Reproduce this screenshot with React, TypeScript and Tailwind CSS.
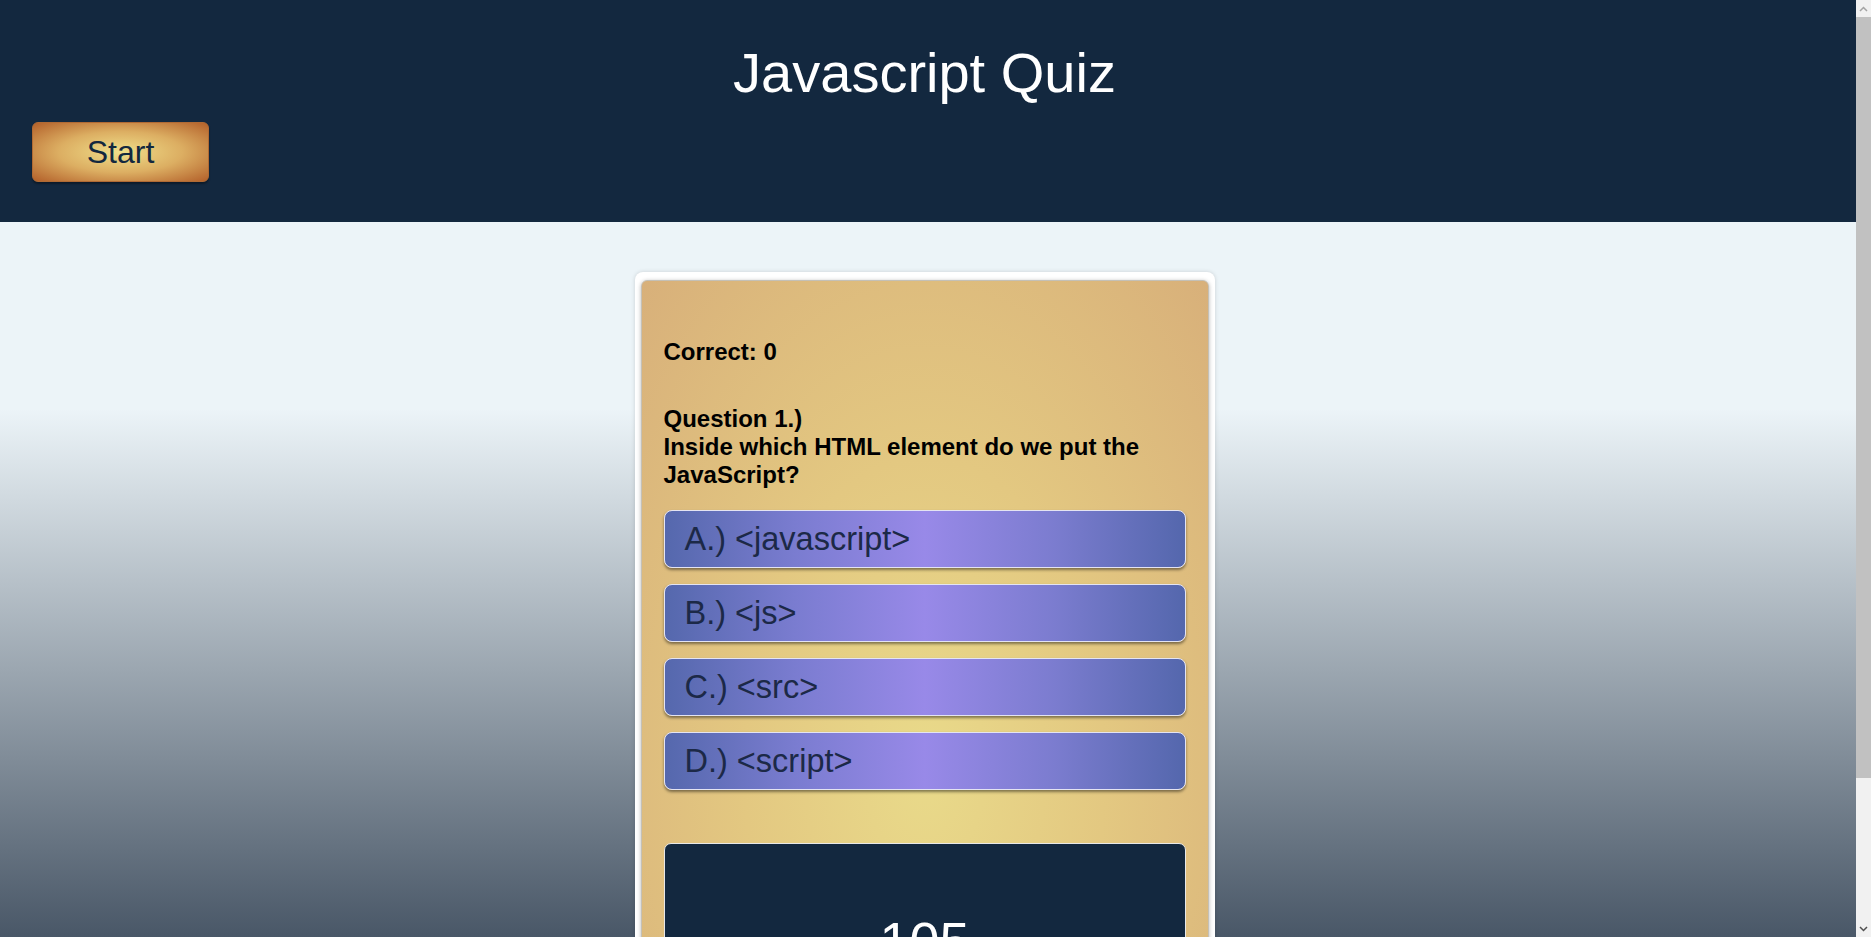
import * as React from "react"

const answers = ["A.) <javascript>", "B.) <js>", "C.) <src>", "D.) <script>"]

function AnswerButton({ label }: { label: string }) {
    return (
        <button className="block w-full h-[58px] text-left pl-[20px] rounded-[8px] border border-[#e4e4f2] shadow-[0_2px_3px_rgba(0,0,0,0.45)] bg-[linear-gradient(to_right,#5568ad_0%,#7a7cd0_25%,#9889e8_50%,#7b7ccf_75%,#5467ad_100%)] text-[32.5px] leading-[37px] text-[#1c2947]">
            {label}
        </button>
    )
}

// window scrollbar, page is taller than the viewport
function ScrollBar() {
    return (
        <div className="w-[15px] h-full flex flex-col bg-[#f1f1f1]">
            <div className="h-[17px] flex items-center justify-center">
                <svg width="9" height="6" viewBox="0 0 9 6" fill="none" stroke="#a3a3a3" strokeWidth="1.5">
                    <path d="M1 5 L4.5 1.5 L8 5" />
                </svg>
            </div>
            <div className="h-[761px] bg-[#c1c1c1]" />
            <div className="flex-1" />
            <div className="h-[17px] flex items-center justify-center">
                <svg width="9" height="6" viewBox="0 0 9 6" fill="none" stroke="#505050" strokeWidth="1.5">
                    <path d="M1 1 L4.5 4.5 L8 1" />
                </svg>
            </div>
        </div>
    )
}

export default function App() {
    return (
        <div className="h-screen flex overflow-hidden font-['Liberation_Sans',Arial,sans-serif]">
            <div className="flex-1 h-full overflow-hidden">
                <header className="h-[222px] bg-[#13283f] pt-[41px] px-[32px]">
                    <h1 className="text-center text-white text-[56px] leading-[64px] pr-[7px]">Javascript Quiz</h1>
                    <button className="mt-[17px] w-[177px] h-[60px] rounded-[6px] border border-[#b06a34] shadow-[0_2px_2px_rgba(0,0,0,0.35)] bg-[radial-gradient(ellipse_at_center,#f0df8a_0%,#dcae62_50%,#b3602a_100%)] text-[32px] text-[#13283f]">
                        Start
                    </button>
                </header>

                {/* main area, gradient runs down behind the quiz card */}
                <main className="h-[890px] bg-[linear-gradient(to_bottom,#ecf4f8_0%,#ecf4f8_21%,#4a5868_80%,#394654_100%)] pt-[50px] flex justify-center pr-[7px]">
                    <div className="w-[580px] h-fit bg-white rounded-[8px] px-[6px] pt-[8px] pb-[6px] shadow-[0_0_4px_rgba(0,0,0,0.15)]">
                        <div className="rounded-[6px] border border-[#c4c0b6] shadow-[0_1px_4px_rgba(0,0,0,0.3)] bg-[radial-gradient(ellipse_at_50%_62%,#e9da8a_0%,#e3c881_45%,#d8b07a_100%)] px-[22px] pt-[57px] pb-[22px]">
                            <p className="text-[24px] font-bold text-black leading-[28px]">Correct: 0</p>
                            <p className="mt-[39px] text-[24px] font-bold text-black leading-[28px]">
                                Question 1.)
                                <br />
                                Inside which HTML element do we put the JavaScript?
                            </p>
                            <div className="mt-[21px] flex flex-col gap-[16px]">
                                {answers.map((a) => (
                                    <AnswerButton key={a} label={a} />
                                ))}
                            </div>
                            <div className="mt-[53px] h-[200px] rounded-[7px] border border-[#e8e8e8] bg-[#13283f] pt-[66px] text-center text-white text-[54px] leading-[62px]">
                                105
                            </div>
                        </div>
                    </div>
                </main>
            </div>
            <ScrollBar />
        </div>
    )
}
